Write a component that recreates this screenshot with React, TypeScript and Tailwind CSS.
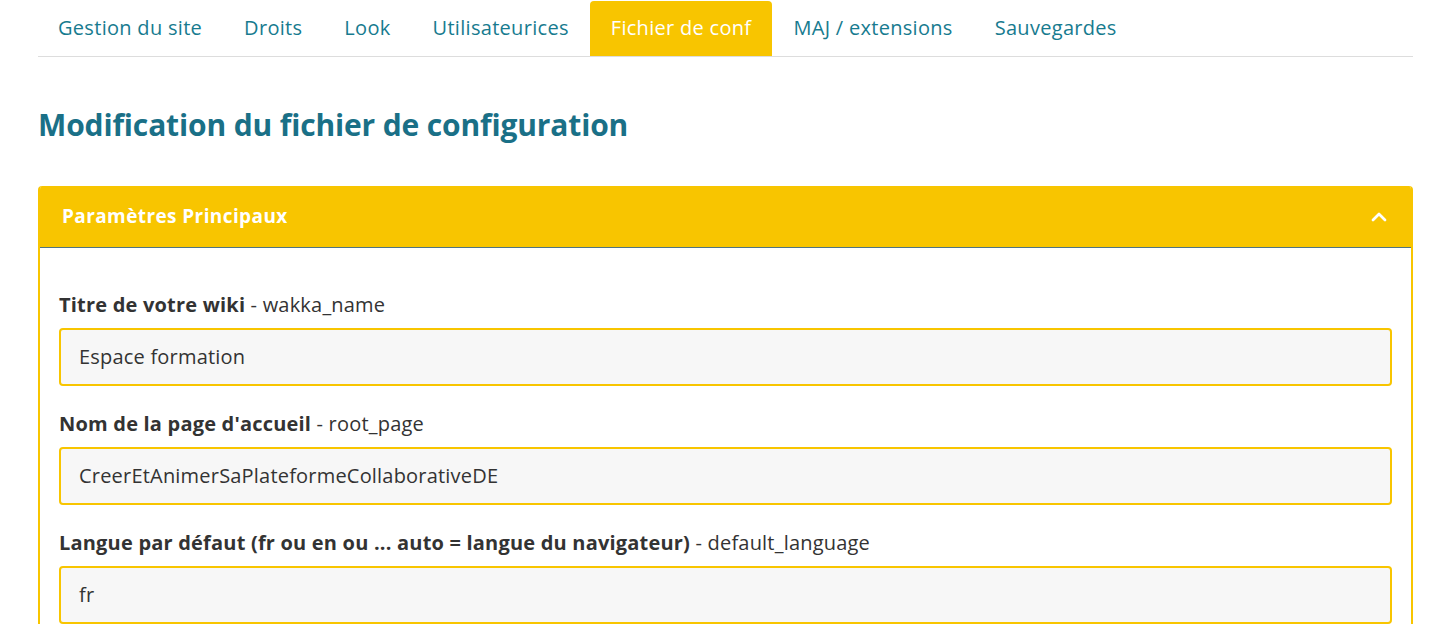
import { ChevronUp } from "lucide-react";

const tabs = [
  "Gestion du site",
  "Droits",
  "Look",
  "Utilisateurices",
  "Fichier de conf",
  "MAJ / extensions",
  "Sauvegardes",
];

const fields = [
  { label: "Titre de votre wiki", key: "wakka_name", value: "Espace formation" },
  { label: "Nom de la page d'accueil", key: "root_page", value: "CreerEtAnimerSaPlateformeCollaborativeDE" },
  {
    label: "Langue par défaut (fr ou en ou ... auto = langue du navigateur)",
    key: "default_language",
    value: "fr",
  },
];

export default function App() {
  return (
    <div className="min-h-screen bg-white pl-[38px] pr-[19px] font-['Open_Sans','Lato',sans-serif] text-[#333]">
      {/* Tabs */}
      <nav className="flex border-b border-[#dddddd] pt-px">
        {tabs.map((t, i) => (
          <a
            key={t}
            className={
              t === "Fichier de conf"
                ? "rounded-t-[4px] bg-[#f8c500] px-[21px] pt-[13px] pb-[15px] text-[20px] leading-[27px] tracking-[0.3px] text-white"
                : i === 0
                ? "pl-[20px] pr-[21px] pt-[13px] pb-[15px] text-[20px] leading-[27px] tracking-[0.3px] text-[#177b8f]"
                : "px-[21px] pt-[13px] pb-[15px] text-[20px] leading-[27px] tracking-[0.3px] text-[#177b8f]"
            }
          >
            {t}
          </a>
        ))}
      </nav>

      <h1 className="mt-[50px] text-[30px] font-bold leading-[36px] tracking-[-0.15px] text-[#1a7087]">
        Modification du fichier de configuration
      </h1>

      {/* Panel */}
      <section className="mt-[43px] overflow-hidden rounded-t-[4px] border-x-2 border-[#f8c500]">
        <header className="flex h-[62px] items-center justify-between border-b border-[#4f7482] bg-[#f8c500] px-[22px] text-white">
          <span className="text-[19px] font-bold tracking-[0.4px]">Paramètres Principaux</span>
          <ChevronUp className="mr-[-2px] h-6 w-6" strokeWidth={2.75} />
        </header>
        <div className="flex flex-col gap-[26px] px-[19px] pt-[45px]">
          {fields.map((f) => (
            <div key={f.key} className="flex flex-col gap-[11px]">
              <div className="text-[20px] leading-[24px] tracking-[0.2px]">
                <span className="font-bold">{f.label}</span> - {f.key}
              </div>
              <div className="flex h-[58px] items-center rounded-[4px] border-2 border-[#f8c500] bg-[#f7f7f7] px-[18px] text-[20px] tracking-[0.2px] text-[#333]">
                {f.value}
              </div>
            </div>
          ))}
        </div>
      </section>
    </div>
  );
}
